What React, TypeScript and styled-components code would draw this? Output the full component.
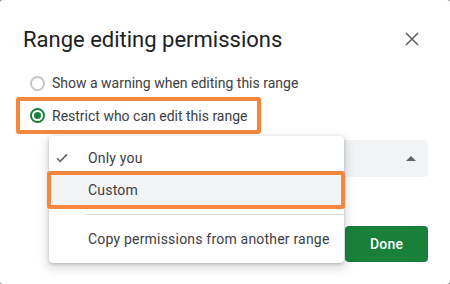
import React from 'react';
import styled, { createGlobalStyle } from 'styled-components';

const C = {
  text: '#3c4043',
  title: '#202124',
  icon: '#5f6368',
  green: '#188038',
  orange: '#f4873d',
  field: '#f1f3f4',
  hover: '#f1f3f4',
  line: '#dadce0',
};

const GlobalStyle = createGlobalStyle`
  * { box-sizing: border-box; }
  html, body { margin: 0; padding: 0; background: #8a8a8a; }
  body { font-family: Roboto, 'Liberation Sans', Arial, sans-serif; }
`;

const Dialog = styled.div`
  position: relative;
  width: 450px;
  height: 284px;
  background: #fff;
  border-radius: 3px;
  padding: 22px 22px 0 23px;
  display: flex;
  flex-direction: column;
`;

const Header = styled.div`
  display: flex;
  align-items: center;
  justify-content: space-between;
  height: 34px;
`;

const Title = styled.h1`
  margin: 0;
  font-size: 22px;
  font-weight: 400;
  color: ${C.title};
`;

const CloseBtn = styled.button`
  border: none;
  background: transparent;
  padding: 0;
  width: 24px;
  height: 24px;
  margin-right: 4px;
  display: flex;
  align-items: center;
  justify-content: center;
  cursor: pointer;
`;

const Options = styled.div`
  display: flex;
  flex-direction: column;
  margin-top: 13px;
  margin-left: -7px;
`;

const RadioRow = styled.label<{ $marked?: boolean }>`
  display: flex;
  align-items: center;
  gap: 7px;
  height: ${p => (p.$marked ? '37px' : '28px')};
  width: ${p => (p.$marked ? '245px' : 'auto')};
  padding-left: ${p => (p.$marked ? '10px' : '14px')};
  border: ${p => (p.$marked ? `4px solid ${C.orange}` : 'none')};
  border-radius: 3px;
  font-size: 14px;
  color: ${C.text};
  cursor: pointer;
`;

const Radio = styled.span<{ $on?: boolean }>`
  width: 15px;
  height: 15px;
  border-radius: 50%;
  border: 2px solid ${p => (p.$on ? C.green : '#c4c7c5')};
  display: flex;
  align-items: center;
  justify-content: center;
  flex-shrink: 0;
  &::after {
    content: '';
    width: 7px;
    height: 7px;
    border-radius: 50%;
    background: ${p => (p.$on ? C.green : 'transparent')};
  }
`;

const Body = styled.div`
  position: relative;
  margin-top: 6px;
  padding-left: 28px;
  display: flex;
  flex-direction: column;
`;

const Select = styled.div`
  height: 37px;
  background: ${C.field};
  border-radius: 4px;
  display: flex;
  align-items: center;
  justify-content: flex-end;
  padding-right: 12px;
`;

const Footer = styled.div`
  display: flex;
  justify-content: flex-end;
  margin-top: 49px;
`;

const DoneBtn = styled.button`
  width: 83px;
  height: 36px;
  border: none;
  border-radius: 4px;
  background: ${C.green};
  color: #fff;
  font-family: Roboto, 'Liberation Sans', Arial, sans-serif;
  font-size: 14px;
  font-weight: 500;
  letter-spacing: 0.2px;
  cursor: pointer;
`;

const Menu = styled.div`
  position: absolute;
  left: 26px;
  top: -4px;
  width: 295px;
  background: #fff;
  border-radius: 4px;
  box-shadow: 0 1px 3px rgba(60, 64, 67, 0.3), 0 4px 8px 3px rgba(60, 64, 67, 0.15);
  padding: 6px 0 8px;
  display: flex;
  flex-direction: column;
`;

const Item = styled.div<{ $active?: boolean; $marked?: boolean }>`
  position: relative;
  height: 32px;
  display: flex;
  align-items: center;
  padding-left: 39px;
  font-size: 14px;
  letter-spacing: 0.2px;
  color: ${C.text};
  background: ${p => (p.$active ? C.hover : 'transparent')};
  cursor: pointer;
  &::after {
    content: '';
    display: ${p => (p.$marked ? 'block' : 'none')};
    position: absolute;
    left: -2px;
    right: -1px;
    top: -3px;
    bottom: -3px;
    border: 4px solid ${C.orange};
    border-radius: 3px;
  }
`;

const Check = styled.span`
  position: absolute;
  left: 7px;
  top: 50%;
  transform: translateY(-50%);
  display: flex;
`;

const Divider = styled.div`
  height: 1px;
  background: ${C.line};
  margin: 8px 0 8px 37px;
`;

export default function App() {
  return (
    <>
      <GlobalStyle />
      <Dialog>
        <Header>
          <Title>Range editing permissions</Title>
          <CloseBtn aria-label="Close">
            <svg width="14" height="14" viewBox="0 0 14 14">
              <path d="M1 1L13 13M13 1L1 13" stroke={C.icon} strokeWidth="1.6" />
            </svg>
          </CloseBtn>
        </Header>

        <Options>
          <RadioRow>
            <Radio />
            Show a warning when editing this range
          </RadioRow>
          <RadioRow $marked>
            <Radio $on />
            Restrict who can edit this range
          </RadioRow>
        </Options>

        <Body>
          <Select>
            <svg width="10" height="5" viewBox="0 0 10 5">
              <path d="M0 5L5 0L10 5Z" fill={C.icon} />
            </svg>
          </Select>
          <Footer>
            <DoneBtn>Done</DoneBtn>
          </Footer>

          <Menu>
            <Item>
              <Check>
                <svg width="12" height="10" viewBox="0 0 12 10">
                  <path d="M1 5.2L4.2 8.4L11 1.4" stroke={C.icon} strokeWidth="1.6" fill="none" />
                </svg>
              </Check>
              Only you
            </Item>
            <Item $active $marked>Custom</Item>
            <Divider />
            <Item>Copy permissions from another range</Item>
          </Menu>
        </Body>
      </Dialog>
    </>
  );
}
